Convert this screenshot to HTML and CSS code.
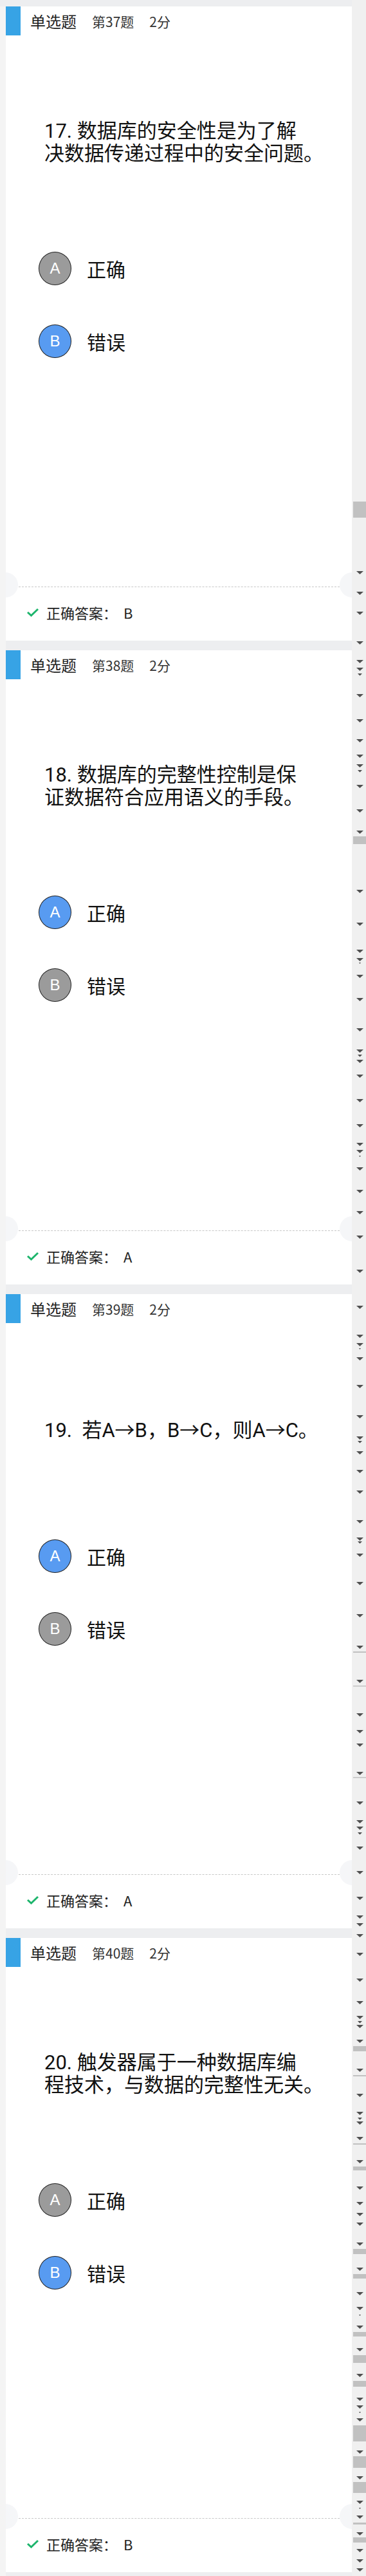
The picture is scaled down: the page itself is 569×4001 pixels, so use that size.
FILE: index.html
```html
<!DOCTYPE html>
<html lang="zh-CN">
<head>
<meta charset="utf-8">
<title>答题</title>
<link rel="stylesheet" href="styles.css">
</head>
<body>
<div class="main">
  <div class="topband"></div>
  <div class="list">
    <section class="card">
      <div class="head"><span class="bar"></span><span class="type">单选题</span><span class="num">第37题</span><span class="score">2分</span></div>
      <div class="question"><p class="qtext">17. 数据库的安全性是为了解<br>决数据传递过程中的安全问题。</p></div>
      <div class="options">
        <div class="opt"><span class="circle">A</span><span class="otext">正确</span></div>
        <div class="opt"><span class="circle on">B</span><span class="otext">错误</span></div>
      </div>
      <div class="spacer"></div>
      <div class="foot"><svg class="check" width="20" height="14" viewBox="0 0 20 14"><polyline points="2,7 7.5,12 18,2" fill="none" stroke="#1db56c" stroke-width="3"/></svg><span class="ans">正确答案：</span><span class="ansv">B</span></div>
    </section>
    <section class="card">
      <div class="head"><span class="bar"></span><span class="type">单选题</span><span class="num">第38题</span><span class="score">2分</span></div>
      <div class="question"><p class="qtext">18. 数据库的完整性控制是保<br>证数据符合应用语义的手段。</p></div>
      <div class="options">
        <div class="opt"><span class="circle on">A</span><span class="otext">正确</span></div>
        <div class="opt"><span class="circle">B</span><span class="otext">错误</span></div>
      </div>
      <div class="spacer"></div>
      <div class="foot"><svg class="check" width="20" height="14" viewBox="0 0 20 14"><polyline points="2,7 7.5,12 18,2" fill="none" stroke="#1db56c" stroke-width="3"/></svg><span class="ans">正确答案：</span><span class="ansv">A</span></div>
    </section>
    <section class="card">
      <div class="head"><span class="bar"></span><span class="type">单选题</span><span class="num">第39题</span><span class="score">2分</span></div>
      <div class="question"><p class="qtext">19.&nbsp; 若A→B，B→C，则A→C。</p></div>
      <div class="options">
        <div class="opt"><span class="circle on">A</span><span class="otext">正确</span></div>
        <div class="opt"><span class="circle">B</span><span class="otext">错误</span></div>
      </div>
      <div class="spacer"></div>
      <div class="foot"><svg class="check" width="20" height="14" viewBox="0 0 20 14"><polyline points="2,7 7.5,12 18,2" fill="none" stroke="#1db56c" stroke-width="3"/></svg><span class="ans">正确答案：</span><span class="ansv">A</span></div>
    </section>
    <section class="card">
      <div class="head"><span class="bar"></span><span class="type">单选题</span><span class="num">第40题</span><span class="score">2分</span></div>
      <div class="question"><p class="qtext">20. 触发器属于一种数据库编<br>程技术，与数据的完整性无关。</p></div>
      <div class="options">
        <div class="opt"><span class="circle">A</span><span class="otext">正确</span></div>
        <div class="opt"><span class="circle on">B</span><span class="otext">错误</span></div>
      </div>
      <div class="spacer"></div>
      <div class="foot"><svg class="check" width="20" height="14" viewBox="0 0 20 14"><polyline points="2,7 7.5,12 18,2" fill="none" stroke="#1db56c" stroke-width="3"/></svg><span class="ans">正确答案：</span><span class="ansv">B</span></div>
    </section>
  </div>
</div>
<div class="scroll">
  <svg width="22" height="4001" viewBox="0 0 22 4001">
    <g fill="#c1c1c1">
      <rect x="2" y="779" width="20" height="25"/>
      <rect x="2" y="1299" width="20" height="12"/>
      <rect x="2" y="2565" width="20" height="2"/>
      <rect x="2" y="2618" width="20" height="1.5"/>
      <rect x="2" y="2760" width="20" height="1.5"/>
      <rect x="2" y="3178" width="20" height="8"/>
      <rect x="2" y="3223" width="20" height="2"/>
      <rect x="2" y="3329" width="20" height="2"/>
      <rect x="2" y="3365" width="20" height="6"/>
      <rect x="2" y="3493" width="20" height="8"/>
      <rect x="2" y="3532" width="20" height="7"/>
      <rect x="2" y="3622" width="20" height="7"/>
      <rect x="2" y="3658" width="20" height="12"/>
      <rect x="2" y="3698" width="20" height="9"/>
      <rect x="2" y="3767" width="20" height="25"/>
      <rect x="2" y="3815" width="20" height="18"/>
      <rect x="2" y="3855" width="20" height="17"/>
      <rect x="2" y="3918" width="20" height="3"/>
      <rect x="2" y="3941" width="20" height="8"/>
    </g>
    <path fill="#505050" d="M7 887h11l-5.5 5zM7 919h11l-5.5 5zM7 950h11l-5.5 5zM7 996h11l-5.5 5zM7 1025h11l-5.5 5zM7 1037h11l-5.5 5zM7 1078h11l-5.5 5zM7 1117h11l-5.5 5zM7 1148h11l-5.5 5zM7 1172h11l-5.5 5zM7 1187h11l-5.5 5zM7 1219h11l-5.5 5zM7 1257h11l-5.5 5zM7 1290h11l-5.5 5zM7 1382h11l-5.5 5zM7 1433h11l-5.5 5zM7 1475h11l-5.5 5zM7 1488h11l-5.5 5zM7 1514h11l-5.5 5zM7 1550h11l-5.5 5zM7 1597h11l-5.5 5zM7 1630h11l-5.5 5zM7 1646h11l-5.5 5zM7 1669h11l-5.5 5zM7 1707h11l-5.5 5zM7 1746h11l-5.5 5zM7 1775h11l-5.5 5zM7 1786h11l-5.5 5zM7 1813h11l-5.5 5zM7 1848h11l-5.5 5zM7 1881h11l-5.5 5zM7 1919h11l-5.5 5zM7 1972h11l-5.5 5zM7 2028h11l-5.5 5zM7 2073h11l-5.5 5zM7 2086h11l-5.5 5zM7 2108h11l-5.5 5zM7 2151h11l-5.5 5zM7 2198h11l-5.5 5zM7 2231h11l-5.5 5zM7 2254h11l-5.5 5zM7 2283h11l-5.5 5zM7 2315h11l-5.5 5zM7 2361h11l-5.5 5zM7 2388h11l-5.5 5zM7 2413h11l-5.5 5zM7 2457h11l-5.5 5zM7 2507h11l-5.5 5zM7 2556h11l-5.5 5zM7 2609h11l-5.5 5zM7 2661h11l-5.5 5zM7 2687h11l-5.5 5zM7 2708h11l-5.5 5zM7 2752h11l-5.5 5zM7 2798h11l-5.5 5zM7 2827h11l-5.5 5zM7 2837h11l-5.5 5zM7 2868h11l-5.5 5zM7 2906h11l-5.5 5zM7 2946h11l-5.5 5zM7 2975h11l-5.5 5zM7 2987h11l-5.5 5zM7 3004h11l-5.5 5zM7 3033h11l-5.5 5zM7 3073h11l-5.5 5zM7 3108h11l-5.5 5zM7 3131h11l-5.5 5zM7 3145h11l-5.5 5zM7 3168h11l-5.5 5zM7 3213h11l-5.5 5zM7 3252h11l-5.5 5zM7 3280h11l-5.5 5zM7 3295h11l-5.5 5zM7 3319h11l-5.5 5zM7 3355h11l-5.5 5zM7 3396h11l-5.5 5zM7 3420h11l-5.5 5zM7 3437h11l-5.5 5zM7 3452h11l-5.5 5zM7 3483h11l-5.5 5zM7 3522h11l-5.5 5zM7 3560h11l-5.5 5zM7 3583h11l-5.5 5zM7 3612h11l-5.5 5zM7 3647h11l-5.5 5zM7 3687h11l-5.5 5zM7 3724h11l-5.5 5zM7 3736h11l-5.5 5zM7 3756h11l-5.5 5zM7 3806h11l-5.5 5zM7 3846h11l-5.5 5zM7 3884h11l-5.5 5zM7 3907h11l-5.5 5zM7 3933h11l-5.5 5zM7 3959h11l-5.5 5zM7 3975h11l-5.5 5zM7 3989h11l-5.5 5zM9 1046h7l-3.5 3.5zM9 1196h7l-3.5 3.5zM9 1638h7l-3.5 3.5zM9 2238h7l-3.5 3.5zM9 2394h7l-3.5 3.5zM9 2846h7l-3.5 3.5zM9 3139h7l-3.5 3.5zM9 3289h7l-3.5 3.5zM11 1495h3l-1.5 2zM11 1795h3l-1.5 2zM11 2094h3l-1.5 2zM11 3595h3l-1.5 2zM11 3746h3l-1.5 2zM11 3895h3l-1.5 2z"/>
  </svg>
</div>
</body>
</html>
```

FILE: styles.css
```css
* {
  box-sizing: border-box;
  margin: 0;
  padding: 0;
}

html,
body {
  background: #f4f4f4;
}

body {
  display: flex;
  width: 569px;
  font-family: "Noto Sans CJK SC", "Noto Sans", sans-serif;
  color: #1a1a1a;
}

.main {
  width: 547px;
  flex: none;
}

.topband {
  height: 10px;
  background: #edeef0;
}

.list {
  margin-left: 9px;
  background: #edeef0;
  display: flex;
  flex-direction: column;
  gap: 15px;
  padding-bottom: 6px;
}

.card {
  height: 985px;
  background: #fff;
  display: flex;
  flex-direction: column;
  position: relative;
  overflow: hidden;
}

.card::before,
.card::after {
  content: "";
  position: absolute;
  top: 879px;
  width: 39px;
  height: 39px;
  border-radius: 50%;
  background: #f5f6f8;
}

.card::before {
  left: -20px;
}

.card::after {
  right: -20px;
}

.head {
  height: 45px;
  display: flex;
  align-items: center;
  flex: none;
}

.bar {
  width: 23px;
  align-self: stretch;
  background: #37a3e5;
}

.type {
  margin-left: 15px;
  font-size: 24px;
  color: #222;
}

.num {
  margin-left: 24px;
  font-size: 21px;
  color: #333;
}

.score {
  margin-left: 24px;
  font-size: 21px;
  color: #333;
}

.question {
  height: 332px;
  flex: none;
  display: flex;
  align-items: center;
  padding-left: 60px;
}

.qtext {
  white-space: nowrap;
  font-family: Roboto, "Noto Sans CJK SC", sans-serif;
  font-size: 31px;
  line-height: 35px;
  color: #111;
}

.options {
  margin-top: 4px;
  padding-left: 51px;
  display: flex;
  flex-direction: column;
  gap: 61px;
}

.opt {
  display: flex;
  align-items: center;
  height: 52px;
}

.circle {
  width: 51px;
  height: 52px;
  border-radius: 50%;
  border: 1px solid #222;
  background: #9b9b9b;
  color: #fff;
  font-size: 24px;
  display: flex;
  align-items: center;
  justify-content: center;
  font-family: "Liberation Sans", sans-serif;
}

.circle.on {
  background: #589bf1;
}

.otext {
  margin-left: 24px;
  font-size: 30px;
  color: #111;
}

.spacer {
  flex: 1;
}

.foot {
  height: 84px;
  flex: none;
  margin: 0 19px 0 20px;
  border-top: 1px dashed #c8c8c8;
  display: flex;
  align-items: center;
  padding: 0 0 6px 12px;
}

.check {
  flex: none;
}

.ans {
  margin-left: 11px;
  font-size: 22px;
  color: #222;
}

.ansv {
  margin-left: 10px;
  font-size: 22px;
  color: #222;
}

.scroll {
  width: 22px;
  flex: none;
  background: #f0f0f0;
  height: 4001px;
}

.scroll svg {
  display: block;
}
```
